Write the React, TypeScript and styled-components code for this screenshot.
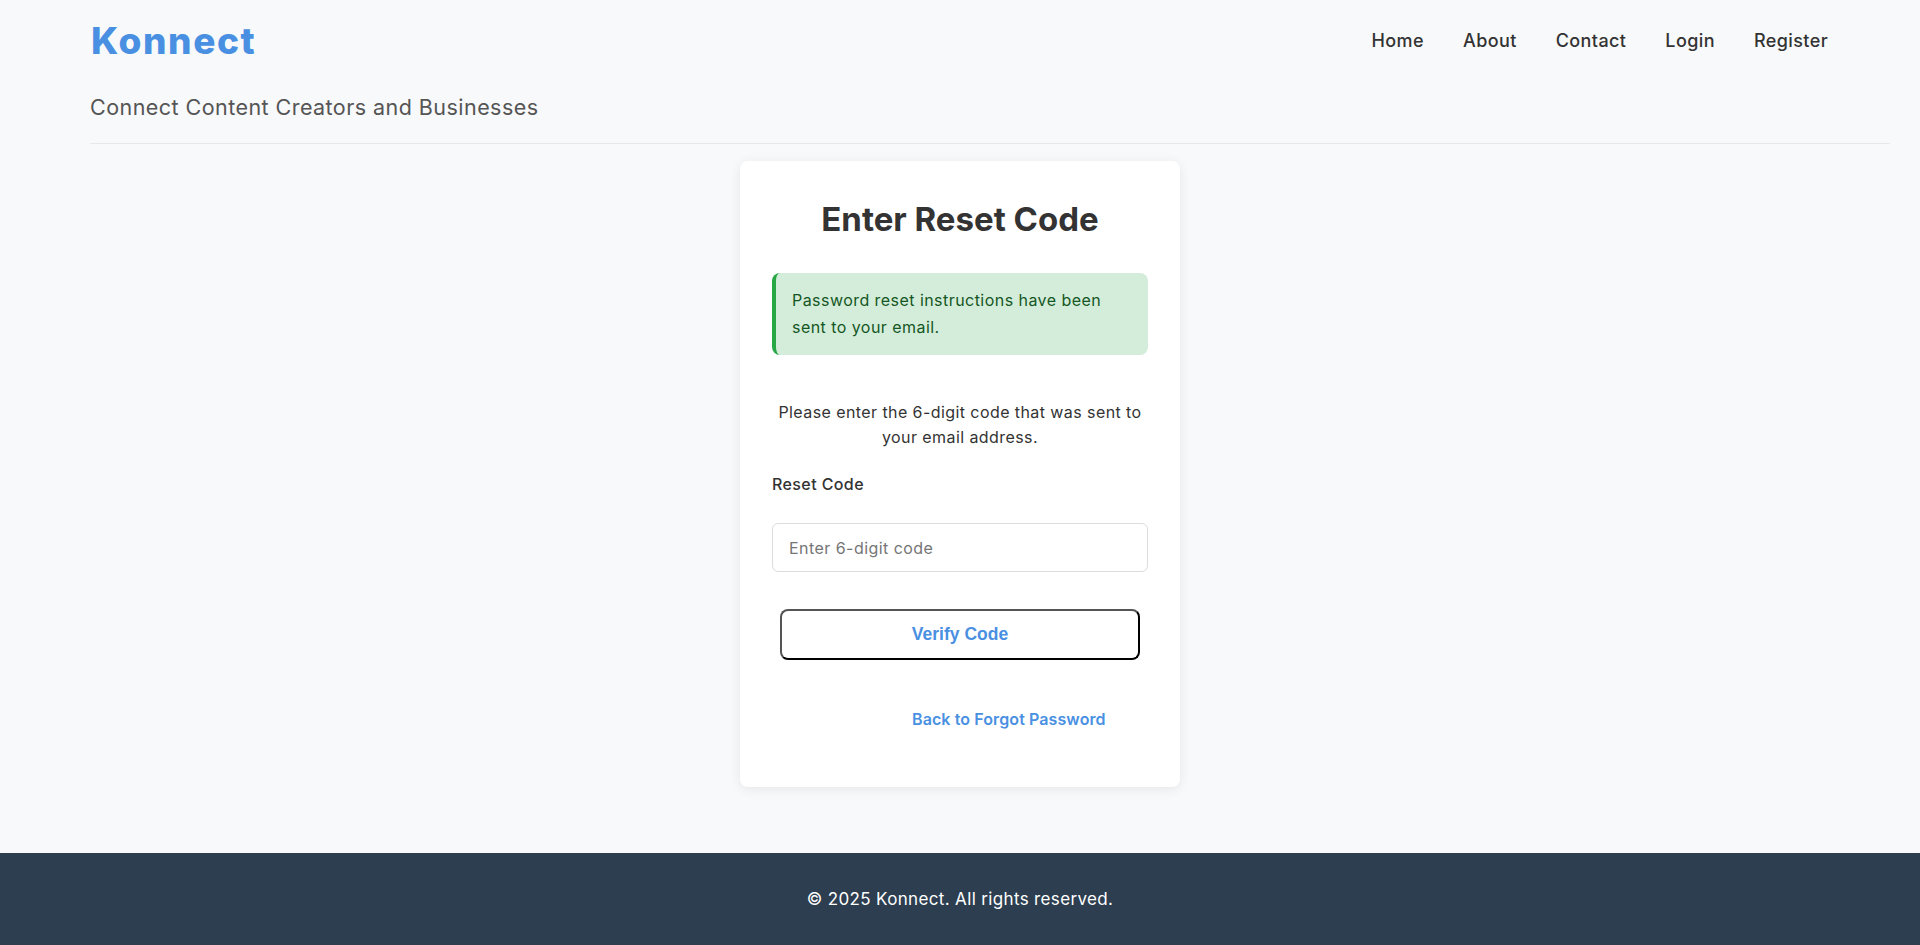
import React from "react";
import styled, { createGlobalStyle } from "styled-components";

const GlobalStyle = createGlobalStyle`
  html, body { margin: 0; padding: 0; }
  body {
    background: #f8f9fa;
    font-family: Inter, "Noto Sans", "DejaVu Sans", sans-serif;
    color: #333;
  }
  * { box-sizing: border-box; }
`;

const Page = styled.div`
  min-height: 100vh;
  display: flex;
  flex-direction: column;
`;

const Header = styled.header`
  padding: 0 30px 0 90px;
`;

const TopBar = styled.div`
  height: 80px;
  display: flex;
  align-items: center;
  justify-content: space-between;
`;

const Logo = styled.a`
  font-size: 37px;
  font-weight: 800;
  letter-spacing: 1.6px;
  color: #4a90e2;
  text-decoration: none;
  line-height: 1;
  padding-left: 1px;
`;

const Nav = styled.nav`
  display: flex;
  gap: 39px;
  padding-right: 62px;
`;

const NavLink = styled.a`
  font-size: 18px;
  font-weight: 500;
  letter-spacing: 0.4px;
  color: #333;
  text-decoration: none;
`;

const Tagline = styled.div`
  margin-top: 12px;
  line-height: 30px;
  font-size: 21.5px;
  letter-spacing: 0.45px;
  color: #555;
  padding-bottom: 21px;
  border-bottom: 1px solid #e6e8eb;
`;

const Main = styled.main`
  flex: 1;
  display: flex;
  justify-content: center;
  align-items: flex-start;
  padding-top: 17px;
`;

const Card = styled.div`
  width: 440px;
  height: 626px;
  background: #fff;
  border-radius: 8px;
  box-shadow: 0 2px 12px rgba(0, 0, 0, 0.08);
  padding: 32px 32px 0;
  display: flex;
  flex-direction: column;
`;

const Title = styled.h2`
  margin: 0 0 28px;
  line-height: 52px;
  font-size: 33px;
  font-weight: 700;
  color: #333;
  text-align: center;
`;

const Alert = styled.div`
  height: 82px;
  background: #d4edda;
  border-left: 4px solid #28a745;
  border-radius: 8px;
  padding: 14px 16px;
  color: #155724;
  font-size: 16px;
  letter-spacing: 0.45px;
  line-height: 27px;
`;

const Intro = styled.p`
  margin: 45px 0 0;
  text-align: center;
  font-size: 16px;
  letter-spacing: 0.42px;
  line-height: 25px;
  color: #333;
`;

const Label = styled.label`
  margin-top: 23px;
  font-size: 16px;
  font-weight: 500;
  letter-spacing: 0.4px;
  line-height: 22px;
  color: #333;
`;

const Input = styled.input`
  margin-top: 28px;
  height: 49px;
  width: 100%;
  border: 1px solid #ddd;
  border-radius: 6px;
  padding: 0 16px;
  font-family: inherit;
  font-size: 16px;
  letter-spacing: 0.45px;
  color: #333;
  background: #fff;
  outline: none;
  &::placeholder { color: #757575; }
`;

const Button = styled.button`
  margin: 37px 8px 0;
  height: 51px;
  background: #fff;
  border: 2px solid;
  border-color: #555 #000 #000 #555;
  border-radius: 8px;
  font-family: "Liberation Sans", Arial, sans-serif;
  font-weight: 700;
  font-size: 17.5px;
  color: #4a90e2;
  cursor: pointer;
`;

const LinkRow = styled.div`
  margin-top: 49px;
  line-height: 20px;
  padding-left: 140px;
`;

const BackLink = styled.a`
  font-size: 16px;
  font-weight: 600;
  letter-spacing: 0.1px;
  color: #4a90e2;
  text-decoration: none;
`;

const Footer = styled.footer`
  height: 92px;
  background: #2c3e50;
  color: #fff;
  display: flex;
  align-items: center;
  justify-content: center;
  font-size: 17px;
  letter-spacing: 0.35px;
`;

export default function App() {
  return (
    <>
      <GlobalStyle />
      <Page>
        <Header>
          <TopBar>
            <Logo href="#">Konnect</Logo>
            <Nav>
              <NavLink href="#">Home</NavLink>
              <NavLink href="#">About</NavLink>
              <NavLink href="#">Contact</NavLink>
              <NavLink href="#">Login</NavLink>
              <NavLink href="#">Register</NavLink>
            </Nav>
          </TopBar>
          <Tagline>Connect Content Creators and Businesses</Tagline>
        </Header>
        <Main>
          <Card>
            <Title>Enter Reset Code</Title>
            <Alert>Password reset instructions have been sent to your email.</Alert>
            <Intro>Please enter the 6-digit code that was sent to your email address.</Intro>
            <Label htmlFor="code">Reset Code</Label>
            <Input id="code" type="text" placeholder="Enter 6-digit code" />
            <Button type="button">Verify Code</Button>
            <LinkRow>
              <BackLink href="#">Back to Forgot Password</BackLink>
            </LinkRow>
          </Card>
        </Main>
        <Footer>© 2025 Konnect. All rights reserved.</Footer>
      </Page>
    </>
  );
}
